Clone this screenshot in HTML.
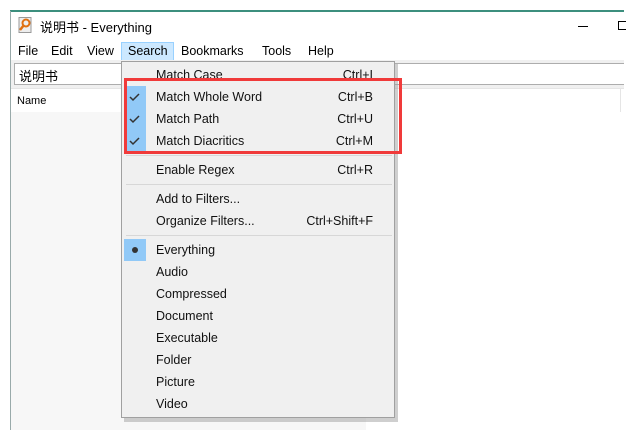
<!DOCTYPE html>
<html><head><meta charset="utf-8"><style>
*{margin:0;padding:0;box-sizing:border-box}
body{width:636px;height:430px;overflow:hidden;background:#fff;position:relative;font-family:"Segoe UI","Liberation Sans","Noto Sans CJK SC",sans-serif;font-size:12.5px;color:#000}
.a{position:absolute;white-space:nowrap}
.mi{position:absolute;left:156px;white-space:nowrap;font-size:12.5px;color:#111}
.sc{position:absolute;right:263px;white-space:nowrap;font-size:12.5px;color:#111}
.sep{position:absolute;left:126px;width:266px;height:1px;background:#d7d7d7}
.hl{position:absolute;left:124px;width:22px;height:22px;background:#91c9f7}
</style></head><body>
<div class="a" style="left:10px;top:10px;width:614px;height:2px;background:#3c8f7e"></div>
<div class="a" style="left:10px;top:11px;width:1px;height:419px;background:#9aa"></div>
<svg class="a" style="left:17px;top:17px" width="16" height="17" viewBox="0 0 16 17"><rect x="2" y="0.5" width="12" height="15" fill="#eee" stroke="#999"/><circle cx="9" cy="6" r="3.5" fill="none" stroke="#e07010" stroke-width="2"/><path d="M7 8 L3 13" stroke="#e07010" stroke-width="2.5"/></svg>
<div class="a" style="left:40px;top:17px;font-size:13px">说明书 - Everything</div>
<div class="a" style="left:578px;top:26px;width:10px;height:1px;background:#000"></div>
<div class="a" style="left:618px;top:21px;width:8px;height:9px;border:1px solid #000;border-right:none"></div>
<div class="a" style="left:121px;top:42px;width:53px;height:19px;background:#cce8ff;border:1px solid #99d1ff"></div>
<div class="a" style="left:18px;top:44px">File</div>
<div class="a" style="left:51px;top:44px">Edit</div>
<div class="a" style="left:87px;top:44px">View</div>
<div class="a" style="left:128px;top:44px">Search</div>
<div class="a" style="left:181px;top:44px">Bookmarks</div>
<div class="a" style="left:262px;top:44px">Tools</div>
<div class="a" style="left:308px;top:44px">Help</div>
<div class="a" style="left:11px;top:60px;width:613px;height:28px;background:#f0f0f0"></div>
<div class="a" style="left:14px;top:63px;width:610px;height:22px;background:#fff;border:1px solid #adadad;border-right:none"></div>
<div class="a" style="left:19px;top:66px;font-size:13px">说明书</div>
<div class="a" style="left:11px;top:88px;width:613px;height:342px;background:#fff"></div>
<div class="a" style="left:11px;top:112px;width:355px;height:318px;background:#f7f7f7"></div>
<div class="a" style="left:17px;top:95px;font-size:11px">Name</div>
<div class="a" style="left:11px;top:88px;width:613px;height:1px;background:#e5e5e5"></div>
<div class="a" style="left:620px;top:88px;width:1px;height:24px;background:#e5e5e5"></div>
<div class="a" style="left:124px;top:64px;width:274px;height:358px;background:#a0a0a0;opacity:.5"></div>
<div class="a" style="left:121px;top:61px;width:274px;height:357px;background:#f0f0f0;border:1px solid #a0a0a0"></div>
<div class="mi" style="top:68px">Match Case</div><div class="sc" style="top:68px">Ctrl+I</div>
<div class="hl" style="top:86px"></div><div class="hl" style="top:108px"></div><div class="hl" style="top:130px"></div>
<svg class="a" style="left:124px;top:86px" width="22" height="66"><g fill="none" stroke="#333" stroke-width="1.5"><path d="M6 11 L9 14 L15 8"/><path d="M6 33 L9 36 L15 30"/><path d="M6 55 L9 58 L15 52"/></g></svg>
<div class="mi" style="top:90px">Match Whole Word</div><div class="sc" style="top:90px">Ctrl+B</div>
<div class="mi" style="top:112px">Match Path</div><div class="sc" style="top:112px">Ctrl+U</div>
<div class="mi" style="top:134px">Match Diacritics</div><div class="sc" style="top:134px">Ctrl+M</div>
<div class="sep" style="top:155px"></div>
<div class="mi" style="top:163px">Enable Regex</div><div class="sc" style="top:163px">Ctrl+R</div>
<div class="sep" style="top:184px"></div>
<div class="mi" style="top:192px">Add to Filters...</div>
<div class="mi" style="top:214px">Organize Filters...</div><div class="sc" style="top:214px">Ctrl+Shift+F</div>
<div class="sep" style="top:235px"></div>
<div class="hl" style="top:239px"></div>
<div class="a" style="left:132px;top:247px;width:6px;height:6px;border-radius:3px;background:#333"></div>
<div class="mi" style="top:243px">Everything</div>
<div class="mi" style="top:265px">Audio</div>
<div class="mi" style="top:287px">Compressed</div>
<div class="mi" style="top:309px">Document</div>
<div class="mi" style="top:331px">Executable</div>
<div class="mi" style="top:353px">Folder</div>
<div class="mi" style="top:375px">Picture</div>
<div class="mi" style="top:397px">Video</div>
<div class="a" style="left:124px;top:78px;width:278px;height:76px;border:3px solid #f03a3a"></div>
</body></html>
